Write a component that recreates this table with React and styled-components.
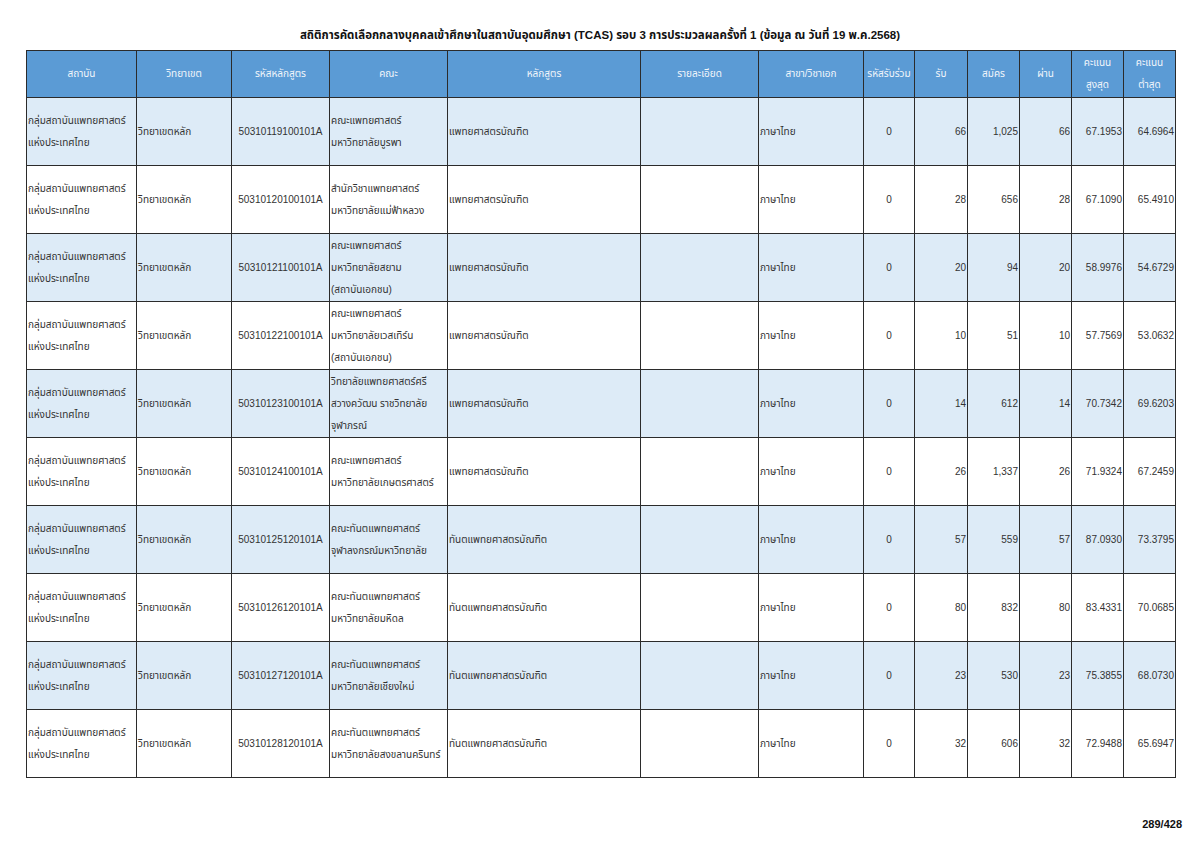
import React from "react";
import styled, { createGlobalStyle } from "styled-components";

const GlobalStyle = createGlobalStyle`
  html, body {
    margin: 0;
    padding: 0;
    background: #ffffff;
  }
  body {
    font-family: Tahoma, "Liberation Sans", "Noto Sans Thai", "Noto Sans", sans-serif;
    color: #333;
  }
`;

const Page = styled.div`
  width: 1200px;
  height: 848px;
  box-sizing: border-box;
  padding: 25px 26px 0 26px;
  display: flex;
  flex-direction: column;
`;

const Title = styled.h1`
  margin: 0;
  height: 25px;
  font-size: 11.5px;
  font-weight: bold;
  color: #111;
  text-align: center;
  line-height: 21px;
`;

const Table = styled.table`
  border-collapse: collapse;
  table-layout: fixed;
  width: 1149px;
  font-size: 10px;
  border: 1.5px solid #333;
`;

const HeadCell = styled.th`
  background: #5b9bd5;
  color: #f2f6fb;
  font-weight: normal;
  height: 46px;
  padding: 0 1px;
  border: 1px solid #2b2b2b;
  line-height: 22px;
  text-align: center;
  vertical-align: middle;
`;

const Row = styled.tr`
  background: ${(p) => (p.$shade ? "#ddebf7" : "#ffffff")};
`;

const Cell = styled.td`
  height: 67px;
  padding: 0 1px;
  border: 1px solid #2b2b2b;
  line-height: 22px;
  vertical-align: middle;
  text-align: ${(p) => p.$align || "left"};
  color: #333;
  white-space: nowrap;
`;

const Footer = styled.div`
  flex: 1;
  display: flex;
  justify-content: flex-end;
  align-items: flex-end;
  margin-right: -8px;
  padding-bottom: 18px;
`;

const PageNo = styled.span`
  font-size: 11px;
  font-weight: bold;
  color: #111;
`;

const cols = [110, 95, 98, 118, 193, 118, 105, 51, 53, 52, 52, 52, 52];

const headers = [
  ["สถาบัน"],
  ["วิทยาเขต"],
  ["รหัสหลักสูตร"],
  ["คณะ"],
  ["หลักสูตร"],
  ["รายละเอียด"],
  ["สาขา/วิชาเอก"],
  ["รหัสรับร่วม"],
  ["รับ"],
  ["สมัคร"],
  ["ผ่าน"],
  ["คะแนน", "สูงสุด"],
  ["คะแนน", "ต่ำสุด"],
];

const MED = "แพทยศาสตรบัณฑิต";
const DENT = "ทันตแพทยศาสตรบัณฑิต";

const rows = [
  ["50310119100101A", ["คณะแพทยศาสตร์", "มหาวิทยาลัยบูรพา"], MED, 66, "1,025", 66, "67.1953", "64.6964"],
  ["50310120100101A", ["สำนักวิชาแพทยศาสตร์", "มหาวิทยาลัยแม่ฟ้าหลวง"], MED, 28, "656", 28, "67.1090", "65.4910"],
  ["50310121100101A", ["คณะแพทยศาสตร์", "มหาวิทยาลัยสยาม", "(สถาบันเอกชน)"], MED, 20, "94", 20, "58.9976", "54.6729"],
  ["50310122100101A", ["คณะแพทยศาสตร์", "มหาวิทยาลัยเวสเทิร์น", "(สถาบันเอกชน)"], MED, 10, "51", 10, "57.7569", "53.0632"],
  ["50310123100101A", ["วิทยาลัยแพทยศาสตร์ศรี", "สวางควัฒน ราชวิทยาลัย", "จุฬาภรณ์"], MED, 14, "612", 14, "70.7342", "69.6203"],
  ["50310124100101A", ["คณะแพทยศาสตร์", "มหาวิทยาลัยเกษตรศาสตร์"], MED, 26, "1,337", 26, "71.9324", "67.2459"],
  ["50310125120101A", ["คณะทันตแพทยศาสตร์", "จุฬาลงกรณ์มหาวิทยาลัย"], DENT, 57, "559", 57, "87.0930", "73.3795"],
  ["50310126120101A", ["คณะทันตแพทยศาสตร์", "มหาวิทยาลัยมหิดล"], DENT, 80, "832", 80, "83.4331", "70.0685"],
  ["50310127120101A", ["คณะทันตแพทยศาสตร์", "มหาวิทยาลัยเชียงใหม่"], DENT, 23, "530", 23, "75.3855", "68.0730"],
  ["50310128120101A", ["คณะทันตแพทยศาสตร์", "มหาวิทยาลัยสงขลานครินทร์"], DENT, 32, "606", 32, "72.9488", "65.6947"],
];

const Lines = ({ items }) =>
  items.map((t, i) => (
    <React.Fragment key={i}>
      {i > 0 && <br />}
      {t}
    </React.Fragment>
  ));

export default function App() {
  return (
    <>
      <GlobalStyle />
      <Page>
        <Title>
          สถิติการคัดเลือกกลางบุคคลเข้าศึกษาในสถาบันอุดมศึกษา (TCAS) รอบ 3 การประมวลผลครั้งที่ 1 (ข้อมูล ณ วันที่ 19 พ.ค.2568)
        </Title>
        <Table>
          <colgroup>
            {cols.map((w, i) => (
              <col key={i} style={{ width: w }} />
            ))}
          </colgroup>
          <thead>
            <tr>
              {headers.map((h, i) => (
                <HeadCell key={i}>
                  <Lines items={h} />
                </HeadCell>
              ))}
            </tr>
          </thead>
          <tbody>
            {rows.map(([code, faculty, program, take, apply, pass, max, min], i) => (
              <Row key={code} $shade={i % 2 === 0}>
                <Cell>
                  กลุ่มสถาบันแพทยศาสตร์
                  <br />
                  แห่งประเทศไทย
                </Cell>
                <Cell>วิทยาเขตหลัก</Cell>
                <Cell $align="center">{code}</Cell>
                <Cell>
                  <Lines items={faculty} />
                </Cell>
                <Cell>{program}</Cell>
                <Cell />
                <Cell>ภาษาไทย</Cell>
                <Cell $align="center">0</Cell>
                <Cell $align="right">{take}</Cell>
                <Cell $align="right">{apply}</Cell>
                <Cell $align="right">{pass}</Cell>
                <Cell $align="right">{max}</Cell>
                <Cell $align="right">{min}</Cell>
              </Row>
            ))}
          </tbody>
        </Table>
        <Footer>
          <PageNo>289/428</PageNo>
        </Footer>
      </Page>
    </>
  );
}
